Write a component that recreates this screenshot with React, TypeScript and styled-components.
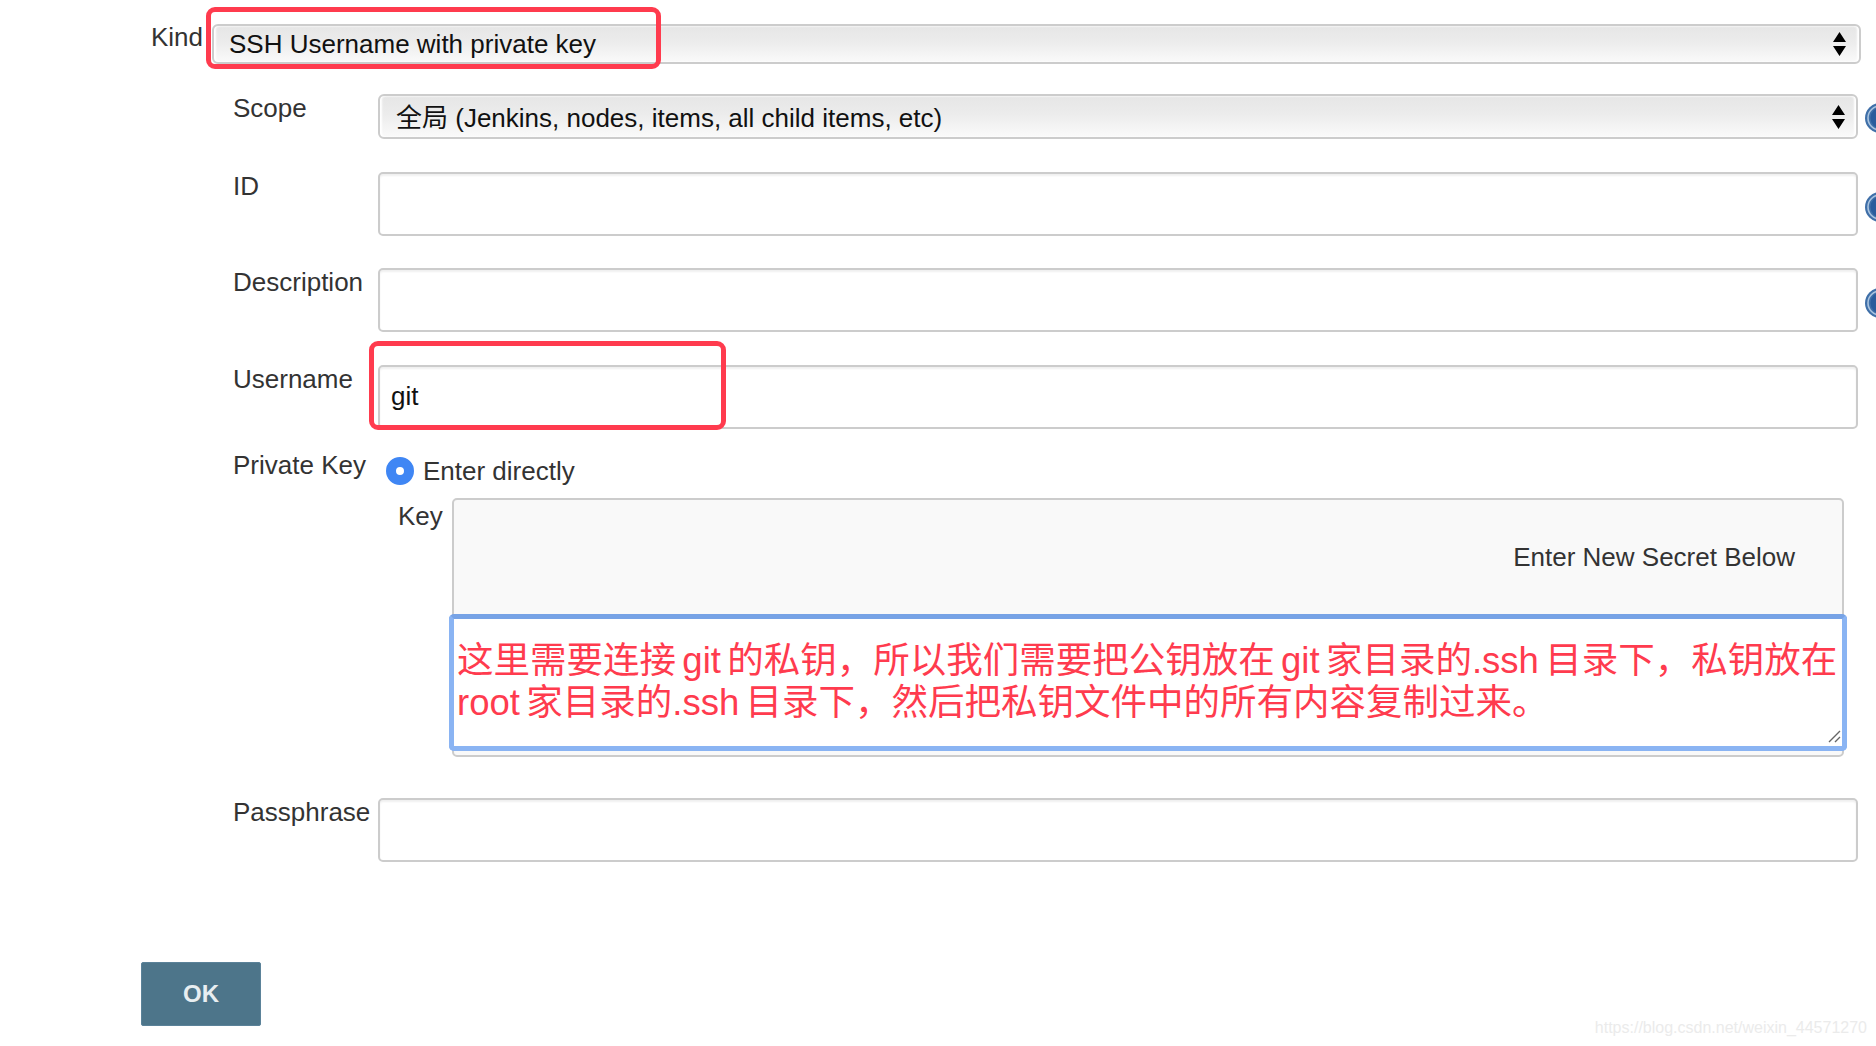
import styled, { createGlobalStyle, css } from "styled-components";

const Global = createGlobalStyle`
  html, body {
    margin: 0;
    background: #fff;
    overflow: hidden;
  }
  * {
    box-sizing: border-box;
  }
`;

const Page = styled.form`
  position: relative;
  width: 1876px;
  height: 1046px;
  overflow: hidden;
  padding-top: 24px;
  font-family: "Liberation Sans", Arial, "Noto Sans CJK SC", sans-serif;
  font-size: 26px;
  color: #333;
  background: #fff;
`;

const KindRow = styled.div`
  display: flex;
  padding-left: 151px;
  margin-bottom: 30px;
`;

const KindLabel = styled.label`
  width: 61px;
  line-height: 26px;
`;

const Row = styled.div<{ $gap?: number }>`
  display: flex;
  padding-left: 233px;
  margin-bottom: ${(p) => p.$gap ?? 33}px;
`;

const Label = styled.label`
  flex: none;
  width: 145px;
  line-height: 26px;
  padding-top: 1px;
`;

const Control = styled.div`
  position: relative;
  flex: none;
`;

const selectLook = css`
  display: flex;
  align-items: center;
  border: 2px solid #ccc;
  border-radius: 6px;
  background: linear-gradient(#e6e6e6 0%, #ececec 45%, #fafafa 100%);
  box-shadow: inset 2px 0 2px #fff, inset -2px 0 2px #fff;
  color: #111;
`;

const KindSelect = styled.div`
  ${selectLook}
  width: 1649px;
  height: 40px;
  padding: 0 0 0 15px;
`;

const ScopeSelect = styled.div`
  ${selectLook}
  width: 1480px;
  height: 45px;
  padding: 0 0 3px 16px;
`;

const Arrows = styled.svg<{ $right: number }>`
  position: absolute;
  top: 50%;
  right: ${(p) => p.$right}px;
  width: 13px;
  height: 24px;
  transform: translateY(-50%);
`;

const TextInput = styled.div`
  flex: none;
  display: flex;
  align-items: center;
  width: 1480px;
  height: 64px;
  padding: 0 11px 1px;
  border: 2px solid #ccc;
  border-radius: 5px;
  background: #fff;
  box-shadow: inset 0 2px 2px #f0f0f0;
  color: #111;
`;

const Help = styled.svg<{ $top: number }>`
  flex: none;
  width: 30px;
  height: 30px;
  margin: ${(p) => p.$top}px 0 0 7px;
`;

const Highlight = styled.div`
  position: absolute;
  border: 5px solid #ff3b4e;
  border-radius: 9px;
  pointer-events: none;
`;

const KindHighlight = styled(Highlight)`
  left: -6px;
  top: -17px;
  width: 455px;
  height: 62px;
`;

const UserHighlight = styled(Highlight)`
  left: -9px;
  top: -24px;
  width: 357px;
  height: 89px;
`;

const PrivateSection = styled.div`
  display: flex;
  padding-left: 233px;
  margin-bottom: 41px;
`;

const PrivateLabel = styled(Label)`
  padding-top: 0;
  margin-top: -4px;
`;

const PrivateBody = styled.div`
  width: 1466px;
`;

const RadioRow = styled.div`
  display: flex;
  align-items: center;
  gap: 9px;
  height: 30px;
  padding-left: 8px;
  margin-bottom: 12px;
`;

const Radio = styled.span`
  flex: none;
  width: 28px;
  height: 28px;
  border: 10px solid #3f86f4;
  border-radius: 50%;
  background: #fff;
`;

const KeyRow = styled.div`
  display: flex;
  padding-left: 20px;
`;

const KeyLabel = styled.label`
  flex: none;
  width: 54px;
  padding-top: 5px;
  line-height: 26px;
`;

const KeyBox = styled.div`
  width: 1392px;
  height: 259px;
  border: 2px solid #ccc;
  border-radius: 5px;
  background: #f9f9f9;
`;

const SecretNote = styled.div`
  display: flex;
  align-items: center;
  justify-content: flex-end;
  height: 114px;
  padding-right: 47px;
`;

const SecretField = styled.div`
  position: relative;
  height: 137px;
  margin: 0 -5px;
  padding: 21px 0 0 3px;
  border: 5px solid #8ab4f3;
  border-top-color: #77a3e6;
  border-radius: 5px;
  background: #fff;
  color: #ff3b4e;
  font-size: 36.5px;
  line-height: 42px;
  white-space: nowrap;
  word-spacing: -3.8px;
`;

const Grip = styled.svg`
  position: absolute;
  right: 1px;
  bottom: 3px;
  width: 14px;
  height: 14px;
`;

const Footer = styled.div`
  padding-left: 141px;
  margin-top: 100px;
`;

const OkButton = styled.button`
  width: 120px;
  height: 64px;
  border: 1px solid #5b8299;
  border-radius: 2px;
  background: #4d758a;
  color: #e8eef1;
  font-family: inherit;
  font-size: 24px;
  font-weight: 700;
`;

const Watermark = styled.div`
  position: absolute;
  right: 9px;
  bottom: 9px;
  color: #ebebeb;
  font-size: 16px;
`;

function UpDown({ right }: { right: number }) {
  return (
    <Arrows $right={right} viewBox="0 0 13 24" aria-hidden>
      <path d="M6.5 0L13 10H0z M0 14h13L6.5 24z" fill="#000" />
    </Arrows>
  );
}

function HelpIcon({ top }: { top: number }) {
  return (
    <Help $top={top} viewBox="0 0 30 30" aria-hidden>
      <circle cx="15" cy="15" r="15" fill="#3f6fa8" />
      <circle cx="15" cy="15" r="12" fill="none" stroke="#a9c3df" strokeWidth="1.6" />
      <circle cx="16" cy="15" r="10.5" fill="#2a5c9c" />
    </Help>
  );
}

export default function App() {
  return (
    <Page>
      <Global />
      <KindRow>
        <KindLabel>Kind</KindLabel>
        <Control>
          <KindSelect>SSH Username with private key</KindSelect>
          <UpDown right={15} />
          <KindHighlight />
        </Control>
      </KindRow>
      <Row>
        <Label>Scope</Label>
        <Control>
          <ScopeSelect>全局 (Jenkins, nodes, items, all child items, etc)</ScopeSelect>
          <UpDown right={13} />
        </Control>
        <HelpIcon top={9} />
      </Row>
      <Row $gap={32}>
        <Label>ID</Label>
        <TextInput />
        <HelpIcon top={20} />
      </Row>
      <Row>
        <Label>Description</Label>
        <TextInput />
        <HelpIcon top={20} />
      </Row>
      <Row $gap={27}>
        <Label>Username</Label>
        <Control>
          <TextInput>git</TextInput>
          <UserHighlight />
        </Control>
      </Row>
      <PrivateSection>
        <PrivateLabel>Private Key</PrivateLabel>
        <PrivateBody>
          <RadioRow>
            <Radio />
            Enter directly
          </RadioRow>
          <KeyRow>
            <KeyLabel>Key</KeyLabel>
            <KeyBox>
              <SecretNote>Enter New Secret Below</SecretNote>
              <SecretField>
                这里需要连接 git 的私钥，所以我们需要把公钥放在 git 家目录的.ssh 目录下，私钥放在
                <br />
                root 家目录的.ssh 目录下，然后把私钥文件中的所有内容复制过来。
                <Grip viewBox="0 0 14 14" aria-hidden>
                  <path d="M2 13L13 2M8 13l5-5" stroke="#666" strokeWidth="1.4" fill="none" />
                </Grip>
              </SecretField>
            </KeyBox>
          </KeyRow>
        </PrivateBody>
      </PrivateSection>
      <Row>
        <Label>Passphrase</Label>
        <TextInput />
      </Row>
      <Footer>
        <OkButton type="button">OK</OkButton>
      </Footer>
      <Watermark>https://blog.csdn.net/weixin_44571270</Watermark>
    </Page>
  );
}
